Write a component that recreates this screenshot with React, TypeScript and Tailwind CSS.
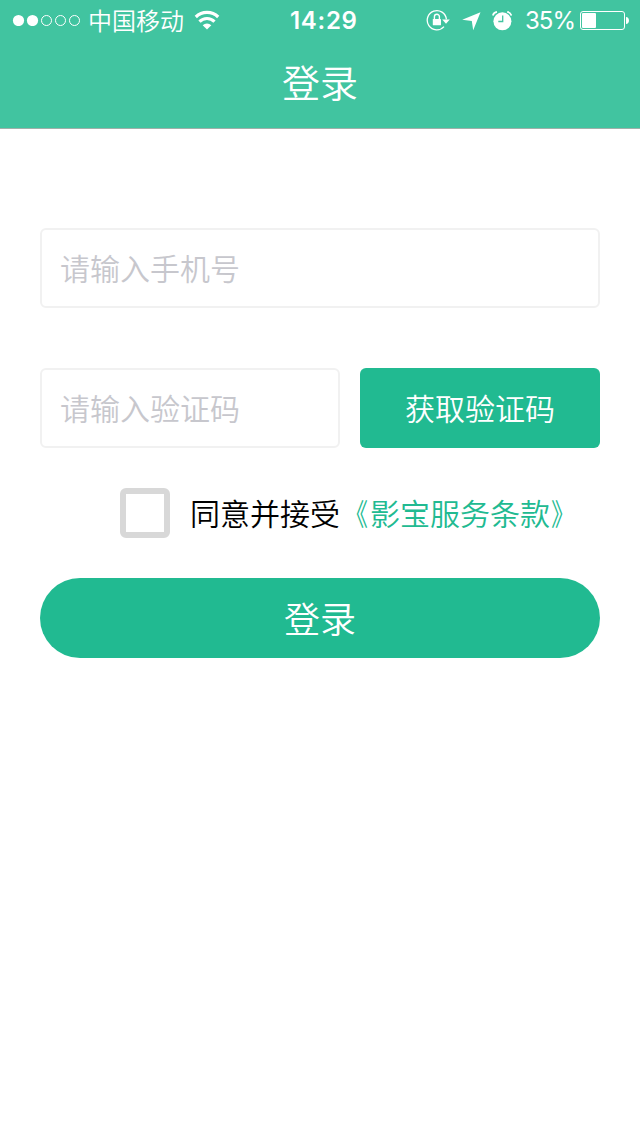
import { useState } from "react";

function SignalDots() {
  return (
    <svg width="70" height="12" viewBox="0 0 70 12" fill="none" stroke="#fff">
      <circle cx="6.5" cy="6.5" r="5.6" fill="#fff" stroke="none" />
      <circle cx="20.5" cy="6.5" r="5.6" fill="#fff" stroke="none" />
      <circle cx="34.5" cy="6.5" r="5" />
      <circle cx="48.5" cy="6.5" r="5" />
      <circle cx="62.5" cy="6.5" r="5" />
    </svg>
  );
}

function WifiIcon() {
  return (
    <svg width="26" height="20" viewBox="0 0 26 20" fill="none" stroke="#fff" strokeWidth="3.2">
      <path d="M1.8 7a16 16 0 0 1 22.4 0" />
      <path d="M5.5 11.6a10.6 10.6 0 0 1 15 0" />
      <path d="M8.7 15.2a6 6 0 0 1 8.6 0L13 19.4z" fill="#fff" stroke="none" />
    </svg>
  );
}

function RotationLockIcon() {
  return (
    <svg width="24" height="22" viewBox="0 0 24 22" fill="none" stroke="#fff">
      <path d="M18 17.6A9.6 9.6 0 1 1 20.4 10.4" strokeWidth="1.3" />
      <path d="M16.2 10.4h7.6L20 14.8z" fill="#fff" stroke="none" />
      <rect x="6.8" y="10" width="8.2" height="6.2" rx="0.5" fill="#fff" stroke="none" />
      <path d="M8.4 10.2V7.8a2.5 2.5 0 0 1 5 0v2.4" strokeWidth="1.4" />
    </svg>
  );
}

function LocationIcon() {
  return (
    <svg width="19" height="19" viewBox="0 0 19 19" fill="#fff">
      <path d="M18.5 0.3 11.2 18.2 9.8 8.9 0.2 7.8z" />
    </svg>
  );
}

function AlarmIcon() {
  return (
    <svg width="20" height="20" viewBox="0 0 20 20" fill="none">
      <circle cx="10.4" cy="10.3" r="9" fill="#fff" />
      <path d="M0.8 4.6A5.2 5.2 0 0 1 5 0.9M19.4 4.6A5.2 5.2 0 0 0 15.2 0.9" stroke="#fff" strokeWidth="1.7" />
      <path d="M10.7 4.5v6H6.3" stroke="#41c4a0" strokeWidth="1.3" />
    </svg>
  );
}

function BatteryIcon() {
  return (
    <svg width="50" height="20" viewBox="0 0 50 20" fill="none">
      <rect x="0.5" y="0.5" width="44" height="18" rx="2.5" stroke="#fff" />
      <rect x="2" y="2" width="14" height="15" rx="1" fill="#fff" />
      <path d="M46 6c1.8 0 3 1.6 3 3.5S47.8 13 46 13z" fill="#fff" />
    </svg>
  );
}

export default function App() {
  const [phone, setPhone] = useState("");
  const [code, setCode] = useState("");
  const [agreed, setAgreed] = useState(false);

  return (
    <div className="w-[640px] h-[1136px] bg-white font-['Noto_Sans_CJK_SC',sans-serif] font-[350]">
      {/* Header */}
      <header className="h-[129px] bg-[#41c4a0] border-b border-[#9fb0aa] text-white">
        <div className="h-10 flex items-center pl-3">
          <SignalDots />
          <span className="w-24 ml-1.5 text-2xl leading-10">中国移动</span>
          <span className="ml-[10px]">
            <WifiIcon />
          </span>
          <span className="w-[68px] ml-[70px] pt-0.5 text-2xl leading-10 tracking-[0.7px] font-[580] font-['Inter',sans-serif] whitespace-nowrap">
            14:29
          </span>
          <span className="ml-[68px]">
            <RotationLockIcon />
          </span>
          <span className="ml-[12px] mt-0.5">
            <LocationIcon />
          </span>
          <span className="ml-[11px] mt-px">
            <AlarmIcon />
          </span>
          <span className="w-[49px] ml-[13px] pt-0.5 text-2xl leading-10 tracking-[-1px] font-normal font-['Inter',sans-serif] whitespace-nowrap">
            35%
          </span>
          <span className="ml-[6px] mt-0.5">
            <BatteryIcon />
          </span>
        </div>
        <h1 className="h-[88px] text-[38px] leading-[82px] text-center">登录</h1>
      </header>

      {/* Form */}
      <form className="px-10 pt-[99px]" onSubmit={(e) => e.preventDefault()}>
        <input
          type="tel"
          className="block w-full h-20 px-[18px] pb-0.5 border-2 border-[#f1f1f1] rounded-md text-[30px] placeholder:text-[#c7c7cd] outline-none"
          placeholder="请输入手机号"
          value={phone}
          onChange={(e) => setPhone(e.target.value)}
        />

        <div className="flex gap-5 mt-[60px]">
          <input
            type="text"
            className="w-[300px] h-20 px-[18px] pb-0.5 border-2 border-[#f1f1f1] rounded-md text-[30px] placeholder:text-[#c7c7cd] outline-none"
            placeholder="请输入验证码"
            value={code}
            onChange={(e) => setCode(e.target.value)}
          />
          <button type="button" className="w-60 h-20 pb-0.5 bg-[#21ba91] rounded-md text-[30px] text-white">
            获取验证码
          </button>
        </div>

        {/* Terms */}
        <div className="flex items-center h-[50px] mt-10 pl-20">
          <input
            type="checkbox"
            className="appearance-none w-[50px] h-[50px] shrink-0 border-[6px] border-[#d8d8d8] rounded-md checked:bg-[#21ba91]"
            checked={agreed}
            onChange={(e) => setAgreed(e.target.checked)}
          />
          <span className="ml-5 pb-0.5 text-[30px] text-black whitespace-nowrap">同意并接受</span>
          <a className="pb-0.5 text-[30px] text-[#21ba91] whitespace-nowrap">
            <span className="inline-block origin-right -translate-x-0.5 scale-x-[.8]">《</span>
            影宝服务条款
            <span className="inline-block origin-left translate-x-px scale-x-[.8]">》</span>
          </a>
        </div>

        <button type="submit" className="block w-full h-20 mt-10 pb-0.5 bg-[#21ba91] rounded-full text-[36px] text-white">
          登录
        </button>
      </form>
    </div>
  );
}
